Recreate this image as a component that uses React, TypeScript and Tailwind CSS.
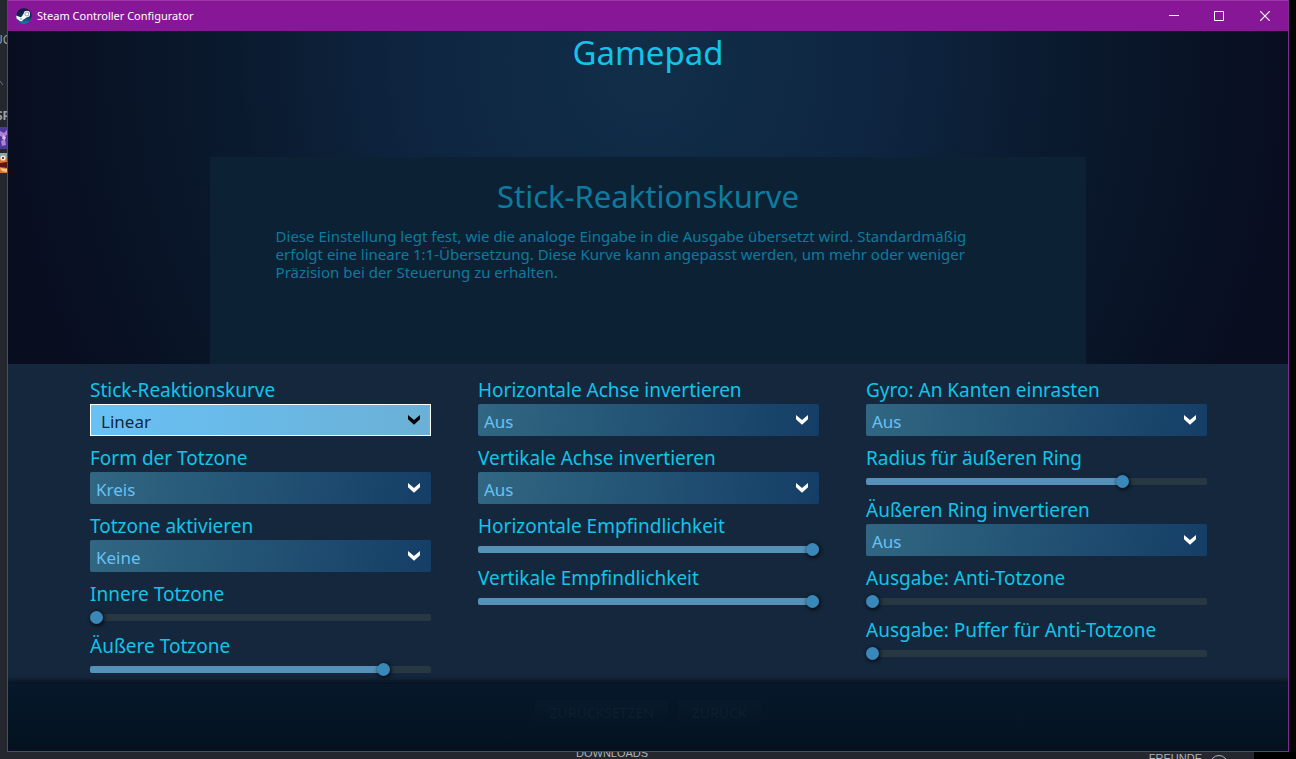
import React, { useId, useState } from 'react';

type Option = { kind: 'select'; label: string; value: string; focused?: boolean };
type Range = { kind: 'range'; label: string; value: number };
type Setting = Option | Range;

const COLUMNS: Setting[][] = [
  [
    { kind: 'select', label: 'Stick-Reaktionskurve', value: 'Linear', focused: true },
    { kind: 'select', label: 'Form der Totzone', value: 'Kreis' },
    { kind: 'select', label: 'Totzone aktivieren', value: 'Keine' },
    { kind: 'range', label: 'Innere Totzone', value: 0 },
    { kind: 'range', label: 'Äußere Totzone', value: 875 },
  ],
  [
    { kind: 'select', label: 'Horizontale Achse invertieren', value: 'Aus' },
    { kind: 'select', label: 'Vertikale Achse invertieren', value: 'Aus' },
    { kind: 'range', label: 'Horizontale Empfindlichkeit', value: 1000 },
    { kind: 'range', label: 'Vertikale Empfindlichkeit', value: 1000 },
  ],
  [
    { kind: 'select', label: 'Gyro: An Kanten einrasten', value: 'Aus' },
    { kind: 'range', label: 'Radius für äußeren Ring', value: 763 },
    { kind: 'select', label: 'Äußeren Ring invertieren', value: 'Aus' },
    { kind: 'range', label: 'Ausgabe: Anti-Totzone', value: 0 },
    { kind: 'range', label: 'Ausgabe: Puffer für Anti-Totzone', value: 0 },
  ],
];

const SteamLogo: React.FC = () => (
  <svg viewBox="0 0 16 16" className="w-4 h-4" aria-hidden="true">
    <defs>
      <linearGradient id="steam-disc" x1="0" y1="0" x2="0" y2="1">
        <stop offset="0" stopColor="#13173a" />
        <stop offset="0.5" stopColor="#0d2a55" />
        <stop offset="1" stopColor="#1482b4" />
      </linearGradient>
    </defs>
    <circle cx="8" cy="8" r="7.8" fill="url(#steam-disc)" />
    <path d="M0.3 7.6 4.4 9.3 7.6 8.4 9.6 10 7.2 11.6A2.3 2.3 0 0 1 2.9 12L0.8 11A7.6 7.6 0 0 1 .3 7.6Z" fill="#fff" />
    <path d="M7.8 5.6 5 9.4 7.4 11.6 11.4 9Z" fill="#fff" />
    <circle cx="5.1" cy="11" r="1.2" fill="#b4c3d8" />
    <circle cx="10.9" cy="6" r="3.2" fill="#fff" />
    <circle cx="10.9" cy="6" r="2" fill="none" stroke="#5b6c8c" strokeWidth="0.7" />
  </svg>
);

const TitleBar: React.FC = () => (
  <header className="flex items-center h-[31px] bg-[#881798] border-t border-[#9a35a8] text-white">
    <div className="flex items-center gap-[5px] pl-2 flex-1">
      <SteamLogo />
      <span className="text-[11px]">Steam Controller Configurator</span>
    </div>
    <button aria-label="Minimieren" className="flex items-center justify-center w-[45px] h-full">
      <svg viewBox="0 0 10 10" className="w-[10px] h-[10px]"><path d="M0 4.5H10" stroke="#fff" /></svg>
    </button>
    <button aria-label="Maximieren" className="flex items-center justify-center w-[45px] h-full">
      <svg viewBox="0 0 10 10" className="w-[10px] h-[10px]"><path d="M.5.5H9.5V9.5H.5Z" fill="none" stroke="#fff" /></svg>
    </button>
    <button aria-label="Schließen" className="flex items-center justify-center w-[47px] h-full">
      <svg viewBox="0 0 10 10" className="w-[10px] h-[10px]"><path d="M0 0 10 10M10 0 0 10" stroke="#fff" strokeWidth="1.2" /></svg>
    </button>
  </header>
);

const SelectField: React.FC<{ setting: Option }> = ({ setting }) => {
  const id = useId();
  const look = setting.focused
    ? 'border border-white pl-[10px] text-[#13273c] bg-linear-100 from-[#67c1f5] to-[#6bb0d6]'
    : 'rounded-xs pl-[6px] text-[#67c1f5] bg-linear-100 from-[#316782] to-[#153e66]';

  return (
    <div className="mb-2">
      <label htmlFor={id} className="block text-[19px] leading-7 text-[#10c4ea]">{setting.label}</label>
      <div className="relative">
        <select
          id={id}
          defaultValue={setting.value}
          className={`block appearance-none w-full h-8 pt-[3px] text-[17px] leading-7 outline-none ${look}`}
        >
          <option>{setting.value}</option>
        </select>
        <svg
          viewBox="0 0 12 10"
          className={`absolute right-[11px] top-[11px] w-3 h-[10px] pointer-events-none ${setting.focused ? 'fill-black' : 'fill-white'}`}
        >
          <path d="M0 0 6 5 12 0V4.2L6 9.8 0 4.2Z" />
        </svg>
      </div>
    </div>
  );
};

const RangeField: React.FC<{ setting: Range }> = ({ setting }) => {
  const id = useId();
  const [value, setValue] = useState(setting.value);
  const percent = value / 10;

  return (
    <div className="mb-2">
      <label htmlFor={id} className="block text-[19px] leading-7 text-[#10c4ea]">{setting.label}</label>
      <div className="flex items-end h-4">
        <input
          id={id}
          type="range"
          min={0}
          max={1000}
          value={value}
          onChange={(e) => setValue(Number(e.target.value))}
          style={{ '--fill': `${percent}%` } as React.CSSProperties}
          className="appearance-none block w-full h-[13px] m-0 bg-transparent outline-none [&::-webkit-slider-runnable-track]:h-[7px] [&::-webkit-slider-runnable-track]:rounded-xs [&::-webkit-slider-runnable-track]:bg-[linear-gradient(to_right,#5591b8_var(--fill),#283843_var(--fill))] [&::-webkit-slider-thumb]:appearance-none [&::-webkit-slider-thumb]:w-[13px] [&::-webkit-slider-thumb]:h-[13px] [&::-webkit-slider-thumb]:-mt-[3px] [&::-webkit-slider-thumb]:rounded-full [&::-webkit-slider-thumb]:bg-[#3a87b9] [&::-webkit-slider-thumb]:shadow-[1px_1px_4px_#000]"
        />
      </div>
    </div>
  );
};

const Settings: React.FC = () => (
  <section className="grid grid-cols-3 gap-x-[47px] pl-[82px] pr-[81px] pt-3 bg-[#14273c]">
    {COLUMNS.map((column, i) => (
      <div key={i}>
        {column.map((setting) =>
          setting.kind === 'select' ? (
            <SelectField key={setting.label} setting={setting} />
          ) : (
            <RangeField key={setting.label} setting={setting} />
          )
        )}
      </div>
    ))}
  </section>
);

const Hero: React.FC = () => (
  <section className="flex flex-col flex-1 items-center bg-[radial-gradient(ellipse_660px_700px_at_50%_10%,#112e49_0%,#0e2541_35%,#0a1a2e_62%,#080d1f_100%)]">
    <h1 className="h-[126px] pt-1 text-[33px] leading-9 text-[#10c4ea]">Gamepad</h1>
    <div className="flex-1 w-[68.5%] pl-[66px] pr-[86px] pt-5 bg-[#0c2133] text-[#0d7b9f]">
      <h2 className="-mr-5 text-center text-[31px] leading-[38px]">Stick-Reaktionskurve</h2>
      <p className="mt-3 text-[15px] leading-[18px]">
        Diese Einstellung legt fest, wie die analoge Eingabe in die Ausgabe übersetzt wird. Standardmäßig erfolgt
        eine lineare 1:1-Übersetzung. Diese Kurve kann angepasst werden, um mehr oder weniger Präzision bei der
        Steuerung zu erhalten.
      </p>
    </div>
  </section>
);

const Footer: React.FC = () => (
  <footer className="flex items-start justify-center gap-[10px] h-[67px] pt-4 bg-linear-to-b from-[#06182b] to-[#04121f] shadow-[0_-1px_5px_2px_#06101a] text-sm text-[#0e1f30]">
    <button className="h-6 pt-px px-[14px] bg-linear-to-b from-[#08192b] to-[#05162600]">ZURÜCKSETZEN</button>
    <button className="h-6 pt-px px-[14px] bg-linear-to-b from-[#08192b] to-[#05162600]">ZURÜCK</button>
  </footer>
);

// Narrow slice of the library window showing past the left edge
const LibraryEdge: React.FC = () => (
  <aside className="flex flex-col w-[7px] overflow-hidden bg-[#24272e] text-[#9a9ea6] text-xs leading-4">
    <div className="h-8 shrink-0" />
    <span className="-ml-[6px] h-[42px] shrink-0">UC</span>
    <svg viewBox="0 0 7 34" className="w-[7px] h-[34px] shrink-0"><path d="M0 7 3 11" stroke="#6c7078" /></svg>
    <span className="-ml-[4px] h-[19px] shrink-0 font-bold">SP</span>
    <svg viewBox="0 0 7 46" className="w-[7px] h-[46px] shrink-0">
      <path d="M0 0H7V22H0Z" fill="#4a389c" />
      <path d="M0 4 4 6 7 3V8L3 10 0 9ZM1 14 5 12 6 18 2 19Z" fill="#b07fd0" />
      <path d="M3 8 6 10 5 13 2 12Z" fill="#e0b8e4" />
      <path d="M0 26H7V46H0Z" fill="#d9792c" />
      <path d="M0 26H7V31H0Z" fill="#8fa3ab" />
      <circle cx="3" cy="31" r="2.6" fill="#f2ead8" />
      <circle cx="3" cy="31" r="1" fill="#2a1a14" />
      <path d="M0 36 7 35V41L0 40Z" fill="#5c1712" />
      <path d="M0 41 7 42V45L2 44Z" fill="#e8c6a4" />
    </svg>
  </aside>
);

const App: React.FC = () => (
  <div className="flex flex-col min-h-screen overflow-hidden bg-black font-['Noto_Sans',sans-serif]">
    <div className="flex flex-1">
      <LibraryEdge />
      <main className="flex flex-col flex-1 min-w-0 overflow-hidden border-x border-b border-[#7b2f8c]">
        <TitleBar />
        <Hero />
        <Settings />
        <Footer />
      </main>
      <div className="w-[7px] bg-[#050505]" />
    </div>
    <div className="flex justify-between h-[7px] mr-[42px] overflow-hidden bg-[#24272e] text-[#b0b3b8] text-[11px] font-['Liberation_Sans',sans-serif]">
      <span className="pl-[576px] -mt-[5px] leading-3">DOWNLOADS</span>
      <span className="flex gap-2 pr-[26px] leading-3">
        FREUNDE
        <span className="block w-[18px] h-[18px] mt-[3px] rounded-full border border-[#b0b3b8]" />
      </span>
    </div>
  </div>
);

export default App;
